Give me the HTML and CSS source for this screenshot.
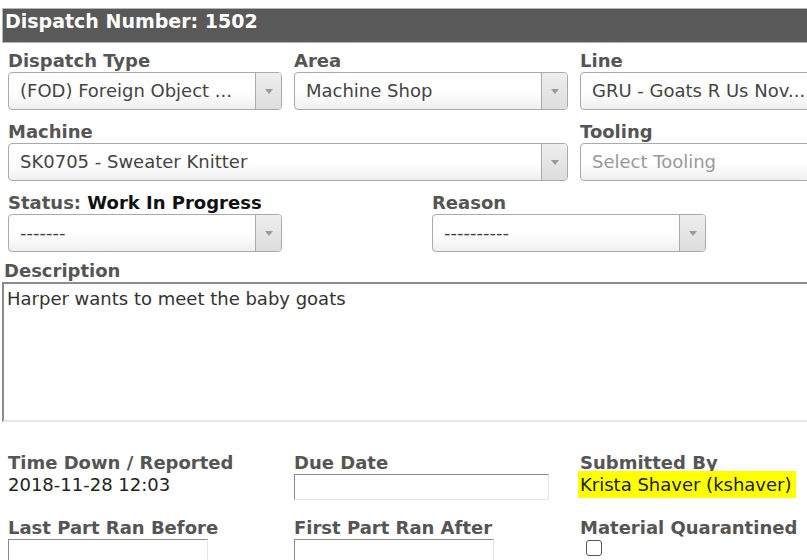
FILE: index.html
```html
<!DOCTYPE html>
<html lang="en">
<head>
  <meta charset="UTF-8">
  <title>Dispatch 1502</title>
  <link rel="stylesheet" href="styles.css">
</head>
<body>
  <div class="page">
    <div class="title-bar">Dispatch Number: 1502</div>

    <div class="row thirds">
      <div class="field">
        <label>Dispatch Type</label>
        <div class="select"><span>(FOD) Foreign Object ...</span><b class="arrow"></b></div>
      </div>
      <div class="field">
        <label>Area</label>
        <div class="select"><span>Machine Shop</span><b class="arrow"></b></div>
      </div>
      <div class="field">
        <label>Line</label>
        <div class="select plain"><span>GRU - Goats R Us Nov...</span></div>
      </div>
    </div>

    <div class="row thirds">
      <div class="field span2">
        <label>Machine</label>
        <div class="select"><span>SK0705 - Sweater Knitter</span><b class="arrow"></b></div>
      </div>
      <div class="field">
        <label>Tooling</label>
        <div class="select plain"><span class="placeholder">Select Tooling</span></div>
      </div>
    </div>

    <div class="row halves">
      <div class="field">
        <label>Status: <em>Work In Progress</em></label>
        <div class="select"><span>-------</span><b class="arrow"></b></div>
      </div>
      <div class="field">
        <label>Reason</label>
        <div class="select"><span>----------</span><b class="arrow"></b></div>
      </div>
    </div>

    <div class="description">
      <label>Description</label>
      <div class="textarea">Harper wants to meet the baby goats</div>
    </div>

    <div class="row thirds info">
      <div class="field">
        <label>Time Down / Reported</label>
        <div class="value">2018-11-28 12:03</div>
      </div>
      <div class="field">
        <label>Due Date</label>
        <div class="input"></div>
      </div>
      <div class="field">
        <label>Submitted By</label>
        <div class="value"><mark>Krista Shaver (kshaver)</mark></div>
      </div>
    </div>

    <div class="row thirds info">
      <div class="field">
        <label>Last Part Ran Before</label>
        <div class="input short"></div>
      </div>
      <div class="field">
        <label>First Part Ran After</label>
        <div class="input short"></div>
      </div>
      <div class="field">
        <label>Material Quarantined</label>
        <div class="checkbox"></div>
      </div>
    </div>
  </div>
</body>
</html>
```

FILE: styles.css
```css
body {
  margin: 0;
  font-family: "DejaVu Sans", Verdana, sans-serif;
  color: #333;
  background: #fff;
  overflow: hidden;
}
.page {
  width: 900px;
  padding-top: 8px;
  padding-left: 2px;
}
.title-bar {
  background: #595959;
  border: 1px solid #b5b5b5;
  color: #fff;
  font-weight: bold;
  font-size: 19px;
  height: 33px;
  line-height: 24px;
  padding-left: 2px;
  margin-bottom: 7px;
}
.row {
  display: grid;
  column-gap: 12px;
  padding-left: 6px;
}
.thirds {
  grid-template-columns: 274px 274px 274px;
}
.halves {
  grid-template-columns: 412px 274px;
}
.span2 {
  grid-column: span 2;
}
.field {
  display: flex;
  flex-direction: column;
  align-items: flex-start;
  margin-bottom: 11px;
}
label {
  font-weight: bold;
  font-size: 18px;
  color: #555;
  line-height: 22px;
}
label em {
  font-style: normal;
  color: #111;
}
.select {
  display: flex;
  align-items: stretch;
  box-sizing: border-box;
  width: 100%;
  height: 38px;
  border: 1px solid #aaa;
  border-radius: 4px;
  background: linear-gradient(#fff 50%, #f0f0f0);
  font-size: 18px;
  color: #444;
  overflow: hidden;
}
.halves .select {
  width: 274px;
}
.select span {
  flex: 1;
  padding-left: 11px;
  line-height: 36px;
  white-space: nowrap;
}
.select .placeholder {
  color: #999;
}
.select .arrow {
  width: 25px;
  border-left: 1px solid #aaa;
  background: linear-gradient(#eee, #ddd);
  position: relative;
}
.select .arrow::after {
  content: "";
  position: absolute;
  left: 9px;
  top: 16px;
  border-left: 4px solid transparent;
  border-right: 4px solid transparent;
  border-top: 5px solid #999;
}
.description {
  margin-top: -3px;
}
.description label {
  display: block;
  margin-left: 2px;
}
.textarea {
  height: 128px;
  border-top: 2px solid #8c8c8c;
  border-left: 2px solid #8c8c8c;
  border-bottom: 2px solid #e6e6e6;
  padding: 4px 3px;
  font-size: 18px;
  color: #333;
}
.info {
  margin-top: 30px;
}
.info + .info {
  margin-top: 6px;
}
.value {
  font-size: 18px;
  line-height: 22px;
  color: #222;
}
mark {
  background: #ffff00;
  color: #222;
  padding: 3px 4px 3px 2px;
  margin-left: -2px;
}
.input {
  box-sizing: border-box;
  height: 26px;
  width: 255px;
  border-top: 1px solid #8c8c8c;
  border-left: 1px solid #8c8c8c;
  border-right: 1px solid #e6e6e6;
  border-bottom: 1px solid #e6e6e6;
}
.input.short {
  width: 200px;
}
.checkbox {
  width: 14px;
  height: 14px;
  border: 1px solid #555;
  border-radius: 3px;
  margin: 1px 0 0 6px;
}
```
